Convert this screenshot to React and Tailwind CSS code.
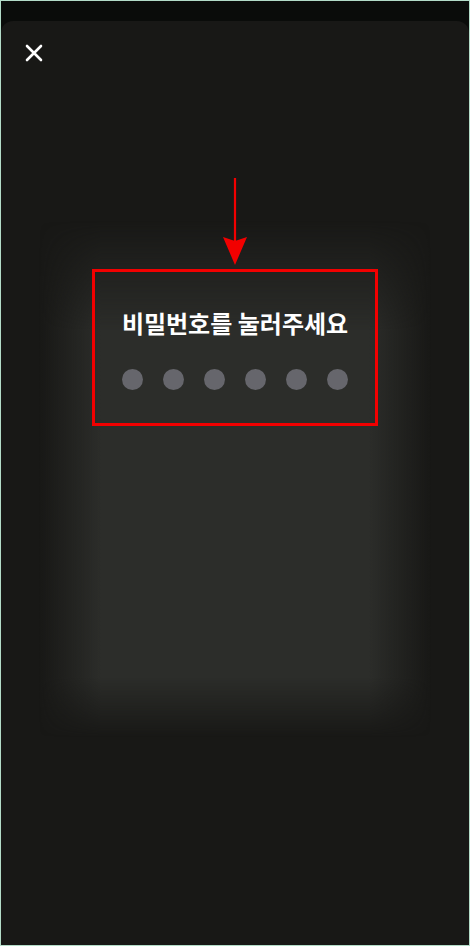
import React from 'react';

const CloseIcon = () => (
  <svg width="20" height="20" viewBox="0 0 20 20" fill="none" stroke="#ffffff" strokeWidth="2.6" strokeLinecap="round">
    <path d="M3 3L17 17M17 3L3 17" />
  </svg>
);

const DownArrow = () => (
  <svg width="26" height="88" viewBox="0 0 26 88" fill="none">
    <path d="M13 0V64" stroke="#f20000" strokeWidth="2.2" />
    <path d="M1 59L13 63L25 59L13 87Z" fill="#f20000" />
  </svg>
);

const PinDots = ({ count = 6 }) => (
  <div className="flex items-center gap-[20px]">
    {Array.from({ length: count }).map((_, i) => (
      <span key={i} className="w-[21px] h-[21px] rounded-full bg-[#66666c]" />
    ))}
  </div>
);

const App = () => {
  return (
    <div
      className="w-[470px] h-[946px] border border-[#b3dcc8] bg-[#0a0c0a] flex flex-col overflow-hidden"
      style={{ fontFamily: '"Noto Sans CJK KR", "Noto Sans", sans-serif' }}
    >
      <div className="h-[20px] shrink-0" />
      <div className="relative flex-1 rounded-t-[12px] bg-[#181816] overflow-hidden">
        {/* soft glow behind the keypad area */}
        <div className="absolute left-[38px] right-[38px] top-[200px] bottom-[208px] pointer-events-none bg-[linear-gradient(to_right,transparent,#2c2d2a_62px,#2c2d2a_calc(100%-62px),transparent)] [mask-image:linear-gradient(to_bottom,transparent,black_110px,black_calc(100%-60px),transparent)]" />

        <div className="relative flex flex-col">
          <button className="ml-[23px] mt-[22px] w-[20px] h-[20px] flex items-center justify-center">
            <CloseIcon />
          </button>

          <div className="flex flex-col items-center mt-[115px]">
            <DownArrow />
            <div className="mt-[3px] w-[286px] h-[157px] border-[3px] border-[#f20000] flex flex-col items-center">
              <p className="pt-[35px] text-[24px] leading-[32px] font-bold text-white">
                비밀번호를 눌러주세요
              </p>
              <div className="mt-[30px]">
                <PinDots />
              </div>
            </div>
          </div>
        </div>
      </div>
    </div>
  );
};

export default App;
